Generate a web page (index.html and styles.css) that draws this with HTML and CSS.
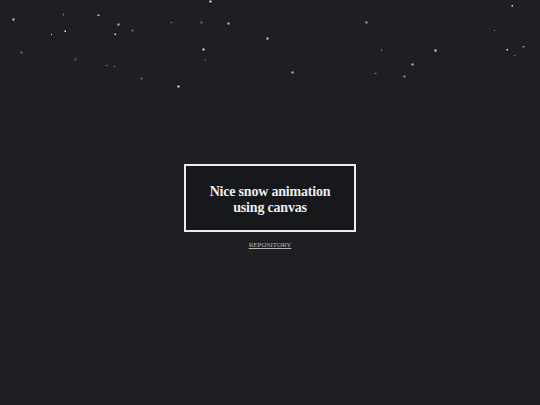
FILE: index.html
```html
<!DOCTYPE html>
<html lang="en">

<head>
    <meta charset="UTF-8">
    <title>Snow</title>
    <link rel="stylesheet" href="styles.css">
</head>

<body>

    <!-- snowflakes, one rect per flake -->
    <svg class="snow" width="540" height="405" viewBox="0 0 540 405">
        <g fill="#fff">
            <rect x="209.5" y="0.5" width="2" height="2" opacity="0.9" />
            <rect x="12.5" y="18.5" width="2" height="2" opacity="0.8" />
            <rect x="63" y="13.5" width="1" height="2" opacity="0.4" />
            <rect x="97.5" y="14.5" width="2" height="1.5" opacity="0.7" />
            <rect x="117.5" y="23.5" width="2" height="2" opacity="0.7" />
            <rect x="131.5" y="29.5" width="2" height="2" opacity="0.35" />
            <rect x="170.5" y="22" width="2" height="1" opacity="0.35" />
            <rect x="200.5" y="21.5" width="2" height="2" opacity="0.35" />
            <rect x="227.5" y="22.5" width="2" height="2" opacity="0.75" />
            <rect x="51" y="34" width="1" height="1" opacity="0.9" />
            <rect x="64.5" y="30.5" width="1.5" height="1.5" opacity="0.9" />
            <rect x="114.5" y="33.5" width="1.5" height="1.5" opacity="0.9" />
            <rect x="266.5" y="37.5" width="2" height="2" opacity="0.8" />
            <rect x="20.5" y="51.5" width="2" height="2" opacity="0.35" />
            <rect x="202.5" y="48.5" width="2" height="2" opacity="0.9" />
            <rect x="205" y="59.5" width="1" height="1.5" opacity="0.35" />
            <rect x="74.5" y="58.5" width="2" height="2" opacity="0.3" />
            <rect x="105.5" y="65" width="2" height="1" opacity="0.35" />
            <rect x="114" y="66" width="1" height="1" opacity="0.6" />
            <rect x="140.5" y="77.5" width="2" height="2" opacity="0.3" />
            <rect x="177.5" y="85.5" width="2" height="2" opacity="0.9" />
            <rect x="511.5" y="5" width="1.5" height="1.5" opacity="0.9" />
            <rect x="365.5" y="21.5" width="2" height="2" opacity="0.6" />
            <rect x="494" y="30" width="1" height="1" opacity="0.5" />
            <rect x="381" y="49.5" width="1" height="1.5" opacity="0.5" />
            <rect x="434.5" y="49.5" width="2" height="2" opacity="0.85" />
            <rect x="506.5" y="49" width="1.5" height="1.5" opacity="0.9" />
            <rect x="522.5" y="46" width="2" height="1.5" opacity="0.5" />
            <rect x="513.5" y="55" width="2" height="1" opacity="0.3" />
            <rect x="411.5" y="63.5" width="2" height="2" opacity="0.7" />
            <rect x="291.5" y="71.5" width="2" height="2" opacity="0.7" />
            <rect x="374.5" y="73" width="2" height="1" opacity="0.4" />
            <rect x="403.5" y="75.5" width="2" height="2" opacity="0.55" />
        </g>
    </svg>

    <main class="container">
        <div class="title-box">
            <h1>Nice snow animation using canvas</h1>
        </div>
        <a class="repo-link" href="#">REPOSITORY</a>
    </main>

</body>

</html>
```

FILE: styles.css
```css
body {
    margin: 0;
    background-color: #1e1f23;
    height: 405px;
    overflow: hidden;
    font-family: "Liberation Serif", serif;
}

.snow {
    position: absolute;
    top: 0;
    left: 0;
    pointer-events: none;
}

.container {
    display: flex;
    flex-direction: column;
    align-items: center;
    padding-top: 164px;
}

.title-box {
    width: 172px;
    height: 68px;
    box-sizing: border-box;
    border: 2px solid #ededed;
    background-color: #17181c;
    display: flex;
    align-items: center;
    justify-content: center;
    padding: 4px 20px 0;
}

h1 {
    margin: 0;
    color: #ececec;
    font-size: 14px;
    line-height: 16px;
    letter-spacing: -0.2px;
    font-weight: bold;
    text-align: center;
}

.repo-link {
    margin-top: 9px;
    color: #b8b8b8;
    font-size: 7px;
    text-decoration: underline;
}
```
